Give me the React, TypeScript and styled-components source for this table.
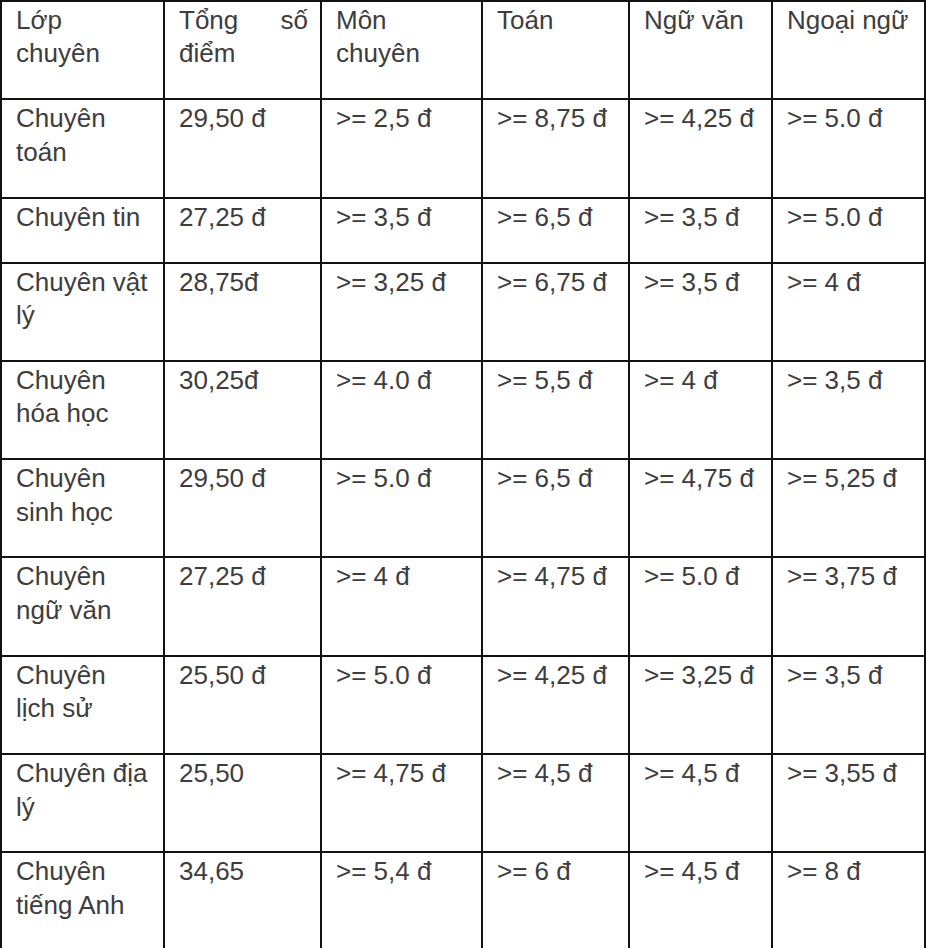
import React from 'react';
import styled, { createGlobalStyle } from 'styled-components';

const GlobalStyle = createGlobalStyle`
  html, body {
    margin: 0;
    padding: 0;
    background: #ffffff;
  }
`;

const ScoreTable = styled.table`
  border-collapse: separate;
  border-spacing: 0;
  table-layout: fixed;
  width: 926px;
  font-family: 'Liberation Sans', Arial, sans-serif;
  font-size: 26px;
  line-height: 33.4px;
  color: #3d3d3d;
`;

const Col = styled.col<{ $w: number }>`
  width: ${p => p.$w}px;
`;

const Cell = styled.td<{ $justify?: boolean }>`
  box-sizing: border-box;
  vertical-align: top;
  text-align: ${p => (p.$justify ? 'justify' : 'left')};
  padding: 2px 12px 27.5px 14px;
  border-left: 2px solid #121212;
  border-top: 2px solid #121212;

  &:last-child {
    border-right: 2px solid #121212;
  }
`;

const widths = [163, 157, 161, 147, 143, 155];

const header = ['Lớp chuyên', 'Tổng số điểm', 'Môn chuyên', 'Toán', 'Ngữ văn', 'Ngoại ngữ'];

const rows: string[][] = [
  ['Chuyên toán', '29,50 đ', '>= 2,5 đ', '>= 8,75 đ', '>= 4,25 đ', '>= 5.0 đ'],
  ['Chuyên tin', '27,25 đ', '>= 3,5 đ', '>= 6,5 đ', '>= 3,5 đ', '>= 5.0 đ'],
  ['Chuyên vật lý', '28,75đ', '>= 3,25 đ', '>= 6,75 đ', '>= 3,5 đ', '>= 4 đ'],
  ['Chuyên hóa học', '30,25đ', '>= 4.0 đ', '>= 5,5 đ', '>= 4 đ', '>= 3,5 đ'],
  ['Chuyên sinh học', '29,50 đ', '>= 5.0 đ', '>= 6,5 đ', '>= 4,75 đ', '>= 5,25 đ'],
  ['Chuyên ngữ văn', '27,25 đ', '>= 4 đ', '>= 4,75 đ', '>= 5.0 đ', '>= 3,75 đ'],
  ['Chuyên lịch sử', '25,50 đ', '>= 5.0 đ', '>= 4,25 đ', '>= 3,25 đ', '>= 3,5 đ'],
  ['Chuyên địa lý', '25,50', '>= 4,75 đ', '>= 4,5 đ', '>= 4,5 đ', '>= 3,55 đ'],
  ['Chuyên tiếng Anh', '34,65', '>= 5,4 đ', '>= 6 đ', '>= 4,5 đ', '>= 8 đ'],
];

const App: React.FC = () => {
  return (
    <>
      <GlobalStyle />
      <ScoreTable>
        <colgroup>
          {widths.map((w, i) => (
            <Col key={i} $w={w} />
          ))}
        </colgroup>
        <tbody>
          <tr>
            {header.map((h, i) => (
              <Cell key={i} $justify={i === 1}>
                {h}
              </Cell>
            ))}
          </tr>
          {rows.map((row, r) => (
            <tr key={r}>
              {row.map((c, i) => (
                <Cell key={i}>{c}</Cell>
              ))}
            </tr>
          ))}
        </tbody>
      </ScoreTable>
    </>
  );
};

export default App;
